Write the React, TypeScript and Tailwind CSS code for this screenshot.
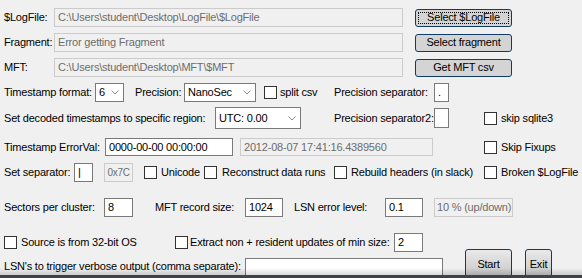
import type { ReactNode } from 'react'

const font = { fontFamily: '"Liberation Sans", Arial, sans-serif' }

function Label({ w, children, className = '' }: { w: string; children: ReactNode; className?: string }) {
    return <div className={`${w} shrink-0 whitespace-nowrap text-[11px] tracking-[-0.2px] leading-none text-black ${className}`}>{children}</div>
}

// enabled edit box: white with grey frame
function Edit({ w, h = 'h-[19px]', value = '', className = '' }: { w: string; h?: string; value?: string; className?: string }) {
    return (
        <div className={`${w} ${h} shrink-0 border border-[#7a7a7a] bg-white flex items-center pl-[3px] text-[11px] tracking-[-0.2px] leading-none text-black whitespace-nowrap overflow-hidden ${className}`}>
            {value}
        </div>
    )
}

// read-only / disabled box
function ReadOnly({ w, h = 'h-[19px]', value, tight = false, className = 'pl-[3px]' }: { w: string; h?: string; value: string; tight?: boolean; className?: string }) {
    const text = tight ? 'text-[10px] tracking-[-0.3px] justify-center' : 'text-[11px] tracking-[-0.2px]'
    return (
        <div className={`${w} ${h} ${text} shrink-0 border border-[#cbcbcb] bg-[#f0f0f0] flex items-center leading-none text-[#6d6d6d] whitespace-nowrap overflow-hidden ${className}`}>
            {value}
        </div>
    )
}

function Combo({ w, h = 'h-[19px]', value }: { w: string; h?: string; value: string }) {
    return (
        <div className={`${w} ${h} shrink-0 border border-[#7a7a7a] bg-white flex items-center justify-between pl-[3px] pr-[4px] text-[11px] tracking-[-0.2px] leading-none text-black`}>
            <span>{value}</span>
            <svg width="8" height="5" viewBox="0 0 8 5" className="shrink-0">
                <polyline points="0.5,0.5 4,4 7.5,0.5" fill="none" stroke="#8a8a8a" strokeWidth="1" />
            </svg>
        </div>
    )
}

function Check({ className = '' }: { className?: string }) {
    return <div className={`w-[13px] h-[13px] shrink-0 border border-[#333333] bg-white ${className}`} />
}

function Btn({ w, h = 'h-[18px]', children, focus = false, className = '' }: { w: string; h?: string; children: ReactNode; focus?: boolean; className?: string }) {
    return (
        <div className={`${w} ${h} shrink-0 relative rounded-[3px] border border-[#0f3b6b] bg-[#d4d4d4] flex items-center justify-center text-[11px] tracking-[-0.2px] leading-none text-black ${className}`}>
            {focus && <div className="absolute inset-[2px] border border-dotted border-black" />}
            <span className="relative">{children}</span>
        </div>
    )
}

const fileRows = [
    { label: '$LogFile:', value: 'C:\\Users\\student\\Desktop\\LogFile\\$LogFile', button: 'Select $LogFile', focus: true },
    { label: 'Fragment:', value: 'Error getting Fragment', button: 'Select fragment', focus: false },
    { label: 'MFT:', value: 'C:\\Users\\student\\Desktop\\MFT\\$MFT', button: 'Get MFT csv', focus: false },
]

export default function App() {
    return (
        <div className="w-[582px] h-[278px] bg-[#f0f0f0] overflow-hidden flex flex-col" style={font}>
            <div className="relative h-[275px] shrink-0 overflow-hidden pl-[4px] pt-[8px] flex flex-col">
                {/* file rows */}
                <div className="flex flex-col gap-[6px]">
                    {fileRows.map((r) => (
                        <div key={r.label} className="flex items-center h-[19px]">
                            <Label w="w-[50px]">{r.label}</Label>
                            <ReadOnly w="w-[349px]" value={r.value} />
                            <Btn w="w-[97px]" className="ml-[12px]" focus={r.focus}>{r.button}</Btn>
                        </div>
                    ))}
                </div>

                {/* timestamp format */}
                <div className="flex items-center h-[19px] mt-[6px]">
                    <Label w="w-[91px]">Timestamp format:</Label>
                    <Combo w="w-[29px]" value="6" />
                    <Label w="w-[49px]" className="ml-[11px]">Precision:</Label>
                    <Combo w="w-[72px]" value="NanoSec" />
                    <Check className="ml-[8px]" />
                    <Label w="w-[54px]" className="ml-[3px]">split csv</Label>
                    <Label w="w-[100px]">Precision separator:</Label>
                    <Edit w="w-[15px]" value="." />
                </div>

                {/* region */}
                <div className="flex items-center h-[22px] mt-[5px]">
                    <Label w="w-[211px]">Set decoded timestamps to specific region:</Label>
                    <Combo w="w-[86px]" h="h-[22px]" value="UTC: 0.00" />
                    <Label w="w-[100px]" className="ml-[33px]">Precision separator2:</Label>
                    <Edit w="w-[15px]" h="h-[20px]" />
                    <Check className="ml-[35px]" />
                    <Label w="w-[70px]" className="ml-[4px]">skip sqlite3</Label>
                </div>

                {/* error val */}
                <div className="flex items-center h-[18px] mt-[9px]">
                    <Label w="w-[101px]">Timestamp ErrorVal:</Label>
                    <Edit w="w-[128px]" h="h-[18px]" value="0000-00-00 00:00:00" />
                    <ReadOnly w="w-[193px]" h="h-[18px]" className="ml-[7px] pl-[3px]" value="2012-08-07 17:41:16.4389560" />
                    <Check className="ml-[51px]" />
                    <Label w="w-[70px]" className="ml-[4px]">Skip Fixups</Label>
                </div>

                {/* separator */}
                <div className="flex items-center h-[19px] mt-[7px]">
                    <Label w="w-[70px]">Set separator:</Label>
                    <Edit w="w-[19px]" value="|" />
                    <ReadOnly w="w-[29px]" tight className="ml-[11px]" value="0x7C" />
                    <Check className="ml-[11px]" />
                    <Label w="w-[43px]" className="ml-[4px]">Unicode</Label>
                    <Check />
                    <Label w="w-[112px]" className="ml-[5px]">Reconstruct data runs</Label>
                    <Check />
                    <Label w="w-[133px]" className="ml-[4px]">Rebuild headers (in slack)</Label>
                    <Check />
                    <Label w="w-[80px]" className="ml-[4px]">Broken $LogFile</Label>
                </div>

                {/* sizes */}
                <div className="flex items-center h-[19px] mt-[16px]">
                    <Label w="w-[100px]">Sectors per cluster:</Label>
                    <Edit w="w-[29px]" value="8" />
                    <Label w="w-[90px]" className="ml-[22px]">MFT record size:</Label>
                    <Edit w="w-[38px]" value="1024" />
                    <Label w="w-[91px]" className="ml-[11px]">LSN error level:</Label>
                    <Edit w="w-[38px]" value="0.1" />
                    <ReadOnly w="w-[79px]" className="ml-[11px] pl-[2px]" value="10 % (up/down)" />
                </div>

                {/* bottom block */}
                <div className="flex mt-[16px]">
                    <div className="flex flex-col">
                        <div className="flex items-center h-[19px]">
                            <Check />
                            <Label w="w-[154px]" className="ml-[4px]">Source is from 32-bit OS</Label>
                            <Check />
                            <Label w="w-[204px]" className="ml-[2px]">Extract non + resident updates of min size:</Label>
                            <Edit w="w-[29px]" value="2" />
                        </div>
                        <div className="flex items-start h-[30px] mt-[6px]">
                            <Label w="w-[241px]" className="pt-[3px]">LSN's to trigger verbose output (comma separate):</Label>
                            <Edit w="w-[198px]" h="h-[30px]" />
                        </div>
                    </div>
                    <Btn w="w-[47px]" h="h-[32px]" className="ml-[22px] mt-[16px] bg-gradient-to-b from-[#e9e9e9] to-[#c4c4c4] items-start pt-[9px]">Start</Btn>
                    <Btn w="w-[27px]" h="h-[32px]" className="ml-[13px] mt-[16px] bg-gradient-to-b from-[#e9e9e9] to-[#c4c4c4] items-start pt-[9px]">Exit</Btn>
                </div>

                <div className="pointer-events-none absolute left-0 right-0 bottom-0 h-[7px] bg-gradient-to-b from-transparent to-black/15" />
            </div>
            <div className="h-[3px] shrink-0 bg-[#3e4247]" />
        </div>
    )
}
